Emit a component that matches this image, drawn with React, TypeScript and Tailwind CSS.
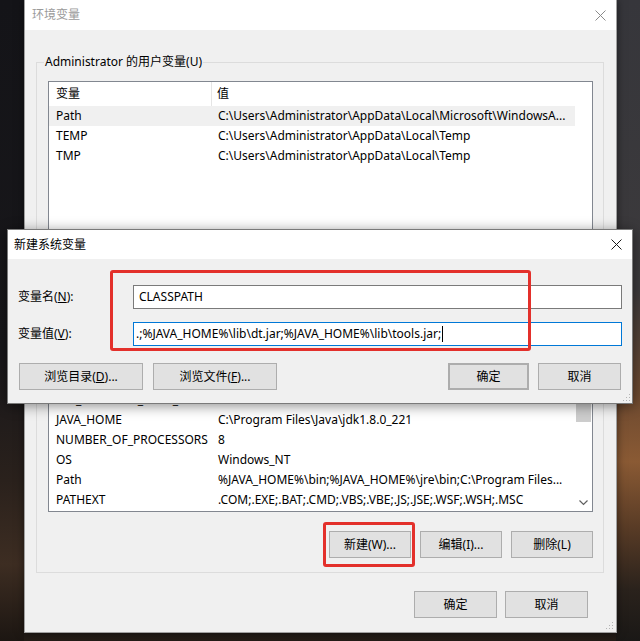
import React from "react";

const font = "font-['Segoe_UI','Noto_Sans','Noto_Sans_CJK_SC',sans-serif]";

function CloseX({ color }: { color: string }) {
  return (
    <svg width="11" height="11" viewBox="0 0 11 11">
      <path d="M0.5 0.5 L10.5 10.5 M10.5 0.5 L0.5 10.5" stroke={color} strokeWidth="1" />
    </svg>
  );
}

function Grip() {
  return (
    <svg width="10" height="10" viewBox="0 0 10 10">
      <g fill="#b4b4b4">
        <rect x="8" y="2" width="1" height="1" />
        <rect x="5" y="5" width="1" height="1" />
        <rect x="8" y="5" width="1" height="1" />
        <rect x="2" y="8" width="1" height="1" />
        <rect x="5" y="8" width="1" height="1" />
        <rect x="8" y="8" width="1" height="1" />
      </g>
    </svg>
  );
}

function Btn({ children, className = "" }: { children: React.ReactNode; className?: string }) {
  return (
    <button className={`h-[27px] border border-[#adadad] bg-[#e1e1e1] text-[12px] text-black flex items-center justify-center ${className}`}>
      {children}
    </button>
  );
}

type Row = [string, string];

const userVars: Row[] = [
  ["Path", "C:\\Users\\Administrator\\AppData\\Local\\Microsoft\\WindowsA..."],
  ["TEMP", "C:\\Users\\Administrator\\AppData\\Local\\Temp"],
  ["TMP", "C:\\Users\\Administrator\\AppData\\Local\\Temp"],
];

const sysVars: Row[] = [
  ["ComSpec", "C:\\Windows\\system32\\cmd.exe"],
  ["DriverData", "C:\\Windows\\System32\\Drivers\\DriverData"],
  ["FPS_BROWSER_USER_PROFILE", "Default"],
  ["JAVA_HOME", "C:\\Program Files\\Java\\jdk1.8.0_221"],
  ["NUMBER_OF_PROCESSORS", "8"],
  ["OS", "Windows_NT"],
  ["Path", "%JAVA_HOME%\\bin;%JAVA_HOME%\\jre\\bin;C:\\Program Files..."],
  ["PATHEXT", ".COM;.EXE;.BAT;.CMD;.VBS;.VBE;.JS;.JSE;.WSF;.WSH;.MSC"],
];

function VarTable({ rows, selected }: { rows: Row[]; selected?: number }) {
  return (
    <div className="w-[526px] flex flex-col">
      <div className="flex h-[24px] items-center">
        <div className="w-[163px] h-full border-r border-[#e5e5e5] pl-[7px] flex items-center">变量</div>
        <div className="pl-[5px]">值</div>
      </div>
      {rows.map((r, i) => (
        <div key={i} className={`flex h-[20px] items-center whitespace-nowrap ${i === selected ? "bg-[#f0f0f0]" : ""}`}>
          <div className="w-[164px] pl-[7px] overflow-hidden">{r[0]}</div>
          <div className="pl-[5px]">{r[1]}</div>
        </div>
      ))}
    </div>
  );
}

export default function App() {
  return (
    <div className={`relative w-[640px] h-[641px] overflow-hidden flex ${font} text-[12px] text-black`}>
      {/* desktop wallpaper */}
      <div className="w-[24px] h-full bg-[linear-gradient(to_bottom,#141418_0%,#18171a_55%,#2a211c_75%,#3d2d22_88%,#1c1612_100%)]" />
      <div className="flex-1 h-full bg-[linear-gradient(to_bottom,#1b1a1c_0%,#1b1a1c_95%,#241c16_100%)]" />
      <div className="w-[24px] h-full bg-[linear-gradient(to_bottom,#36363b_0%,#3c3a3c_45%,#6e4a30_62%,#8a5a34_72%,#5a3c26_82%,#2a221c_92%,#1a1816_100%)]" />

      {/* 环境变量 window */}
      <div className="absolute left-[24px] top-0 w-[593px] h-[633px] flex flex-col bg-[#f0f0f0] border border-[#a0a0a0] border-t-0 shadow-[0_0_8px_rgba(0,0,0,0.5)]">
        <div className="h-[30px] bg-white flex items-center justify-between pl-[7px] pr-[10px] shrink-0">
          <span className="text-[12px] text-[#9a9a9a]">环境变量</span>
          <CloseX color="#8a8a8a" />
        </div>

        <div className="flex flex-col pl-[11px] pr-[12px]">
          <fieldset className="mt-[24px] border border-[#dcdcdc] pl-[11px] pr-[10px] pb-[9px]">
            <legend className="-ml-[4px] px-[1px] leading-[16px]">Administrator 的用户变量(U)</legend>
            <div className="mt-[11px] h-[162px] border border-[#828790] bg-white flex">
              <VarTable rows={userVars} selected={0} />
            </div>
            <div className="mt-[8px] flex justify-end gap-[9px]">
              <Btn className="w-[82px]">新建(N)...</Btn>
              <Btn className="w-[82px]">编辑(E)...</Btn>
              <Btn className="w-[82px]">删除(D)</Btn>
            </div>
          </fieldset>

          <fieldset className="mt-[10px] border border-[#dcdcdc] pl-[11px] pr-[10px] pb-[14px]">
            <legend className="-ml-[4px] px-[1px] leading-[16px]">系统变量(S)</legend>
            <div className="mt-[11px] h-[187px] border border-[#828790] bg-white flex overflow-hidden">
              <VarTable rows={sysVars} />
              <div className="flex-1 flex flex-col items-center">
                <div className="mt-[54px] w-[15px] h-[42px] bg-[#cdcdcd]" />
                <div className="flex-1" />
                <svg width="9" height="6" viewBox="0 0 9 6" className="mb-[5px]">
                  <path d="M0.5 0.5 L4.5 4.5 L8.5 0.5" fill="none" stroke="#606060" strokeWidth="1.2" />
                </svg>
              </div>
            </div>
            <div className="mt-[19px] flex justify-end gap-[9px]">
              <Btn className="w-[82px]">新建(W)...</Btn>
              <Btn className="w-[82px]">编辑(I)...</Btn>
              <Btn className="w-[82px]">删除(L)</Btn>
            </div>
          </fieldset>

          <div className="mt-[18px] flex justify-end gap-[8px] pr-[16px]">
            <Btn className="w-[83px]">确定</Btn>
            <Btn className="w-[83px]">取消</Btn>
          </div>
        </div>

        <div className="absolute right-[2px] bottom-[2px]">
          <Grip />
        </div>
      </div>

      {/* 新建系统变量 dialog */}
      <div className="absolute left-[7px] top-[229px] w-[626px] h-[175px] flex flex-col bg-[#f0f0f0] border border-[#7a7a7a] shadow-[0_2px_12px_rgba(0,0,0,0.45)]">
        <div className="h-[29px] bg-white flex items-center justify-between pl-[6px] pr-[10px] shrink-0">
          <span className="text-[12px]">新建系统变量</span>
          <CloseX color="#1a1a1a" />
        </div>
        <div className="flex flex-col pl-[10px] pr-[10px]">
          <div className="mt-[26px] flex items-center">
            <div className="w-[115px]">
              变量名(<span className="underline">N</span>):
            </div>
            <div className="flex-1 h-[24px] border border-[#7a7a7a] bg-white flex items-center pl-[5px]">CLASSPATH</div>
          </div>
          <div className="mt-[13px] flex items-center">
            <div className="w-[115px]">
              变量值(<span className="underline">V</span>):
            </div>
            <div className="flex-1 h-[24px] border border-[#0078d7] bg-white flex items-center pl-[2px] whitespace-nowrap">
              .;%JAVA_HOME%\lib\dt.jar;%JAVA_HOME%\lib\tools.jar;
              <span className="ml-[1px] w-[1px] h-[16px] bg-black" />
            </div>
          </div>
          <div className="mt-[17px] flex items-center">
            <Btn className="w-[124px] h-[26px] ml-[1px]">
              浏览目录(<span className="underline">D</span>)...
            </Btn>
            <Btn className="w-[124px] h-[26px] ml-[10px]">
              浏览文件(<span className="underline">F</span>)...
            </Btn>
            <div className="flex-1" />
            <Btn className="w-[81px] h-[26px] border-2 border-[#0078d7]">确定</Btn>
            <Btn className="w-[83px] h-[26px] ml-[9px] mr-[1px]">取消</Btn>
          </div>
        </div>
        <div className="absolute right-[1px] bottom-[1px]">
          <Grip />
        </div>
      </div>

      {/* red annotation boxes */}
      <div className="absolute left-[110px] top-[270px] w-[421px] h-[81px] border-[3px] border-[#e3302b] rounded-[3px]" />
      <div className="absolute left-[323px] top-[522px] w-[92px] h-[45px] border-[3px] border-[#e3302b] rounded-[3px]" />
    </div>
  );
}
